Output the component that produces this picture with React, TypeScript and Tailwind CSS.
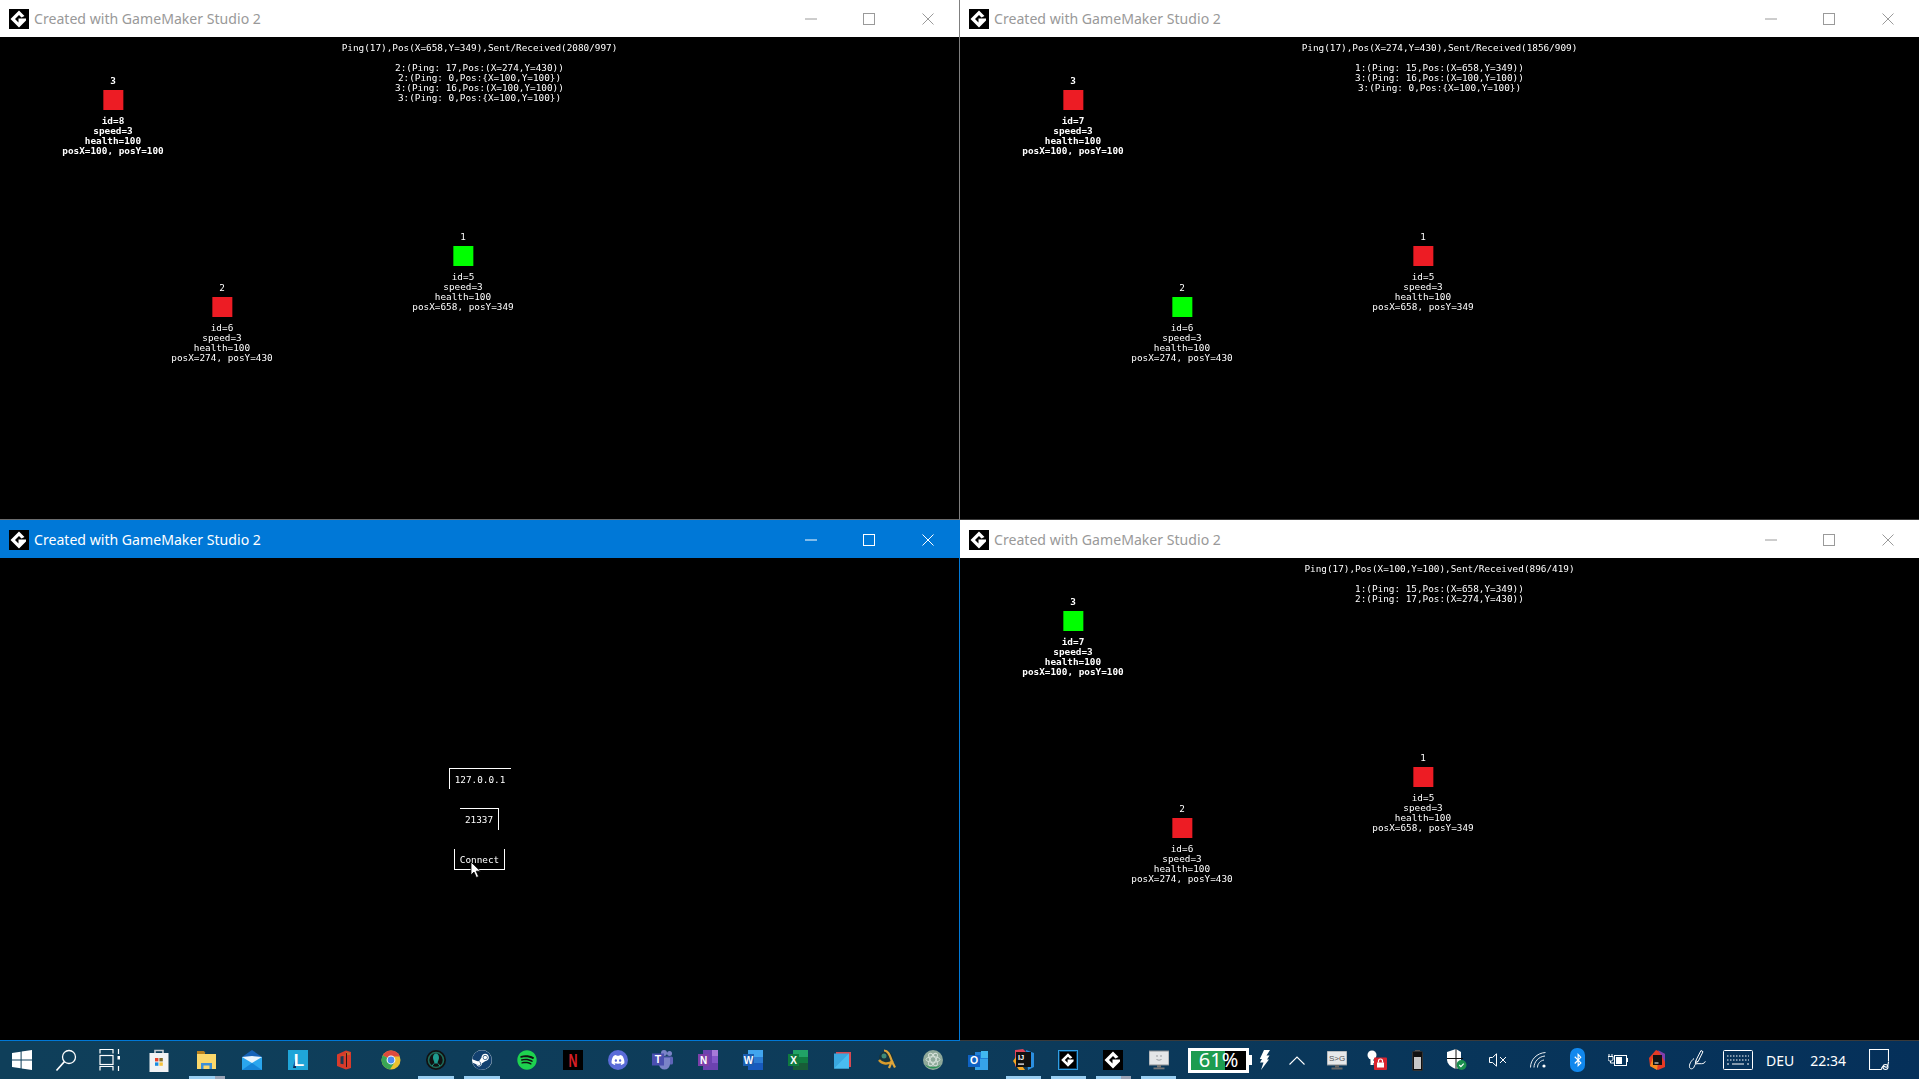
import React from "react";
import { FaDiscord, FaSpotify, FaSteam, FaBluetoothB } from "react-icons/fa";

const SANS = "font-['Noto_Sans',sans-serif]";

function GMLogo({ size = 20 }: { size?: number }) {
  return (
    <svg width={size} height={size} viewBox="0 0 20 20" className="shrink-0">
      <rect width="20" height="20" fill="#000" />
      <polygon points="10,1.5 15.5,7 12.5,8.5 10,6 6,10 9.5,13.5 9.5,9.5 17,9.5 17,11.5 10,18.500 1.500,10" fill="#fff" />
    </svg>
  );
}

type NodeData = { label: string; cx: number; top: number; id: string; x: number; y: number; mine?: boolean; bold?: boolean };

function PlayerNode({ n }: { n: NodeData }) {
  return (
    <div
      className={`absolute -translate-x-1/2 flex flex-col items-center ${n.bold ? "font-bold" : ""}`}
      style={{ left: n.cx, top: n.top }}
    >
      <div className="h-[10px] leading-[10px]">{n.label}</div>
      <div className={`w-[20px] h-[20px] mt-[4px] mb-[6px] ${n.mine ? "bg-[#00ff00]" : "bg-[#ed1c24]"}`} />
      <div className="leading-[10px] whitespace-pre">id={n.id}</div>
      <div className="leading-[10px] whitespace-pre">speed=3</div>
      <div className="leading-[10px] whitespace-pre">health=100</div>
      <div className="leading-[10px] whitespace-pre">posX={n.x}, posY={n.y}</div>
    </div>
  );
}

function Hud({ head, lines }: { head: string; lines: string[] }) {
  return (
    <div className="flex flex-col items-center pt-[6px] text-center">
      <div className="leading-[10px] whitespace-pre">{head}</div>
      <div className="mt-[10px]">
        {lines.map((l, i) => (
          <div key={i} className="leading-[10px] whitespace-pre">{l}</div>
        ))}
      </div>
    </div>
  );
}

function Window({
  active,
  low,
  children,
  className,
}: {
  active?: boolean;
  low?: boolean;
  children: React.ReactNode;
  className?: string;
}) {
  const ic = active ? "#ffffff" : "#9a9a9a";
  return (
    <div className={`flex flex-col min-w-0 min-h-0 ${className ?? ""}`}>
      <div
        className={`flex items-center shrink-0 pl-[9px] pr-[2px] ${
          active ? "h-[38px] pt-[2px] bg-[#0078d7]" : low ? "h-[38px] pt-[1px] bg-white" : "h-[37px] bg-white"
        }`}
      >
        <GMLogo />
        <span className={`ml-[5px] text-[14.1px] ${SANS} ${active ? "text-white" : "text-[#999999]"}`}>
          Created with GameMaker Studio 2
        </span>
        <div className="ml-auto flex items-center">
          <div className="w-[58px] flex justify-center">
            <svg width="12" height="12" viewBox="0 0 12 12"><line x1="0" x2="12" y1="6" y2="6" stroke={ic} /></svg>
          </div>
          <div className="w-[58px] mr-[1px] flex justify-center">
            <svg width="12" height="12" viewBox="0 0 12 12"><rect x="0.5" y="0.5" width="11" height="11" fill="none" stroke={ic} /></svg>
          </div>
          <div className="w-[58px] flex justify-center">
            <svg width="12" height="12" viewBox="0 0 12 12"><path d="M0.5 0.5L11.5 11.5M11.5 0.5L0.5 11.5" stroke={ic} /></svg>
          </div>
        </div>
      </div>
      <div className="relative flex-1 bg-black text-white font-['DejaVu_Sans_Mono',monospace] text-[9.35px] blur-[0.25px]">
        {children}
      </div>
    </div>
  );
}

const nodes = (mine: string, garbled: boolean): NodeData[] => [
  { label: "3", cx: 113, top: 39, id: garbled ? "8" : "7", x: 100, y: 100, mine: mine === "3", bold: true },
  { label: "2", cx: 222, top: 246, id: "6", x: 274, y: 430, mine: mine === "2" },
  { label: "1", cx: 463, top: 195, id: "5", x: 658, y: 349, mine: mine === "1" },
];

function Slot({ w = "w-[45.6px]", bar, grey, children }: { w?: string; bar?: boolean; grey?: boolean; children: React.ReactNode }) {
  return (
    <div className={`relative h-full flex items-center justify-center shrink-0 ${w}`}>
      {children}
      {bar && (
        <div className="absolute bottom-0 left-[5px] right-[5px] h-[3px] flex">
          <div className="flex-1 bg-[#99cdf0]" />
          {grey && <div className="w-[10px] bg-[#9aa3b5]" />}
        </div>
      )}
    </div>
  );
}

const letterFont = "Liberation Sans, sans-serif";
const W2 = "w-[45.1px]";

function OfficeTile({ bg, side, letter }: { bg: string; side: React.ReactNode; letter: string }) {
  return (
    <svg width="20" height="20" viewBox="0 0 20 20">
      {side}
      <rect x="0" y="4" width="11" height="12" fill={bg} />
      <text x="5.5" y="13.6" textAnchor="middle" fontSize="10" fontWeight="700" fill="#fff" fontFamily={letterFont}>{letter}</text>
    </svg>
  );
}

function TrayPen() {
  return (
    <svg width="20" height="22" viewBox="0 0 20 22" fill="none" stroke="#fff" strokeWidth="1">
      <path d="M13 1.5l2 1.2-5 10-2.2-1zM7.8 11.7l-.5 3 2.4-1.8" />
      <path d="M6 9.5C3 12 .8 15.5 1.6 18.5c.7 2 3.4 1.6 4.4-.4.8-1.8.8-3.2 3-3.4h4.5c2 0 3.5-1 3.8-2.4" />
    </svg>
  );
}

export default function App() {
  return (
    <div className="w-[1919px] h-[1079px] overflow-hidden bg-black flex flex-col">
      <div className="grid grid-cols-[960px_959px] grid-rows-[520px_521px] h-[1041px] shrink-0">
        <Window className="border-r border-r-[#7f7f7f] border-b border-b-[#6b6b6b]">
          <Hud
            head="Ping(17),Pos(X=658,Y=349),Sent/Received(2080/997)"
            lines={["2:(Ping: 17,Pos:(X=274,Y=430))", "2:(Ping: 0,Pos:{X=100,Y=100})", "3:(Ping: 16,Pos:(X=100,Y=100))", "3:(Ping: 0,Pos:{X=100,Y=100})"]}
          />
          {nodes("1", true).map((n) => <PlayerNode key={n.label} n={n} />)}
        </Window>
        <Window className="border-b border-b-[#3a3a3a]">
          <Hud
            head="Ping(17),Pos(X=274,Y=430),Sent/Received(1856/909)"
            lines={["1:(Ping: 15,Pos:(X=658,Y=349))", "3:(Ping: 16,Pos:(X=100,Y=100))", "3:(Ping: 0,Pos:{X=100,Y=100})"]}
          />
          {nodes("2", false).map((n) => <PlayerNode key={n.label} n={n} />)}
        </Window>
        <Window active className="border-r border-r-[#0078d7] border-b border-b-[#0078d7]">
          <div className="flex flex-col items-center pt-[210px] gap-[19px]">
            <div className="w-[62px] h-[21px] pt-[2px] border-t border-l border-white flex items-center justify-center font-medium">127.0.0.1</div>
            <div className="w-[39px] h-[22px] pt-[1px] border-t border-r border-white flex items-center justify-center">21337</div>
            <div className="relative w-[51px] h-[21px] pt-[2px] border-l border-r border-b border-white flex items-center justify-center">
              Connect
              <svg width="12" height="18" viewBox="0 0 12 18" className="absolute left-[15px] top-[12px]">
                <path d="M1 1v13l3-3 2.4 5.5 2.2-1L6.2 10.2H10.500z" fill="#fff" stroke="#000" strokeWidth="0.8" />
              </svg>
            </div>
          </div>
        </Window>
        <Window low className="border-b border-b-[#3a3a3a]">
          <Hud
            head="Ping(17),Pos(X=100,Y=100),Sent/Received(896/419)"
            lines={["1:(Ping: 15,Pos:(X=658,Y=349))", "2:(Ping: 17,Pos:(X=274,Y=430))"]}
          />
          {nodes("3", false).map((n) => <PlayerNode key={n.label} n={n} />)}
        </Window>
      </div>

      <div className={`h-[38px] shrink-0 flex items-stretch bg-gradient-to-r from-[#0f3f5a] via-[#0d3b5a] to-[#05305a] ${SANS}`}>
        <Slot w="w-[43px]">
          <svg width="20" height="20" viewBox="0 0 20 20" fill="#fff">
            <path d="M0 3l8.6-1.2v7.7H0zM9.6 1.6L20 0v9.5H9.6zM0 10.5h8.6v7.7L0 17zM9.6 10.5H20V20L9.6 18.4z" />
          </svg>
        </Slot>
        <Slot w="w-[45px]">
          <svg width="22" height="24" viewBox="0 0 22 24" fill="none" stroke="#fff" strokeWidth="1.3">
            <circle cx="14" cy="9" r="6.5" />
            <path d="M9.4 13.6L1.5 22.5" strokeWidth="1.6" />
          </svg>
        </Slot>
        <Slot w="w-[43px]">
          <svg width="22" height="24" viewBox="0 0 22 24" fill="none" stroke="#fff" strokeWidth="1.2">
            <path d="M1 5.5V1.5h13v4M1 22.5v-4h13v4" />
            <rect x="1" y="7.5" width="13" height="9" />
            <path d="M19.5 1v5M19.5 18v5" />
            <rect x="18.5" y="8" width="2.5" height="3.5" fill="#fff" stroke="none" />
          </svg>
        </Slot>
        <Slot w="w-[53px] pl-[3px]">
          <svg width="20" height="24" viewBox="0 0 20 24">
            <path d="M6 6V2.5h8V6" fill="none" stroke="#c9ced3" strokeWidth="1.6" />
            <rect x="0.5" y="5" width="19" height="19" fill="#f2f3f4" />
            <rect x="6" y="10" width="3.4" height="3.4" fill="#e8432b" />
            <rect x="10.4" y="10" width="3.4" height="3.4" fill="#7f6a2b" />
            <rect x="6" y="14.4" width="3.4" height="3.4" fill="#1a8ce0" />
            <rect x="10.4" y="14.4" width="3.4" height="3.4" fill="#f5c33b" />
          </svg>
        </Slot>
        <Slot bar grey>
          <svg width="19" height="20" viewBox="0 0 19 20">
            <path d="M0 1h7l1.5 2H8V5H0z" fill="#b9821f" />
            <rect y="4" width="19" height="15" fill="#fbd86b" />
            <path d="M4 19v-6h11v6h-2.5v-3.4h-6V19z" fill="#3c8fd8" />
          </svg>
        </Slot>
        <Slot>
          <svg width="20" height="20" viewBox="0 0 20 20">
            <path d="M0 7L10 0l10 7v3H0z" fill="#1462b8" />
            <rect y="7" width="20" height="13" fill="#2aa6ee" />
            <path d="M0 7l10 6 10-6-10-1z" fill="#e8f4fc" />
            <path d="M0 20l10-7 10 7z" fill="#1585d8" />
          </svg>
        </Slot>
        <Slot>
          <svg width="20" height="20" viewBox="0 0 20 20">
            <rect width="20" height="20" fill="#1fa5d8" />
            <path d="M5 18L8 4v14z" fill="#0d2c5a" />
            <text x="11" y="16" textAnchor="middle" fontSize="17" fontWeight="700" fill="#fff" fontFamily={letterFont}>L</text>
          </svg>
        </Slot>
        <Slot>
          <svg width="16" height="20" viewBox="0 0 16 20">
            <path d="M1 4.5L10 .5l5 1.5v16l-5 1.5-9-3.5z" fill="#d83b2b" />
            <path d="M5 6l5-1.5V2l4 .8v2z" fill="#c46a2a" />
            <path d="M4.5 6.5l3-.6v8.4l-3-.6z" fill="#173a55" />
            <path d="M10 3l1 .3v14L10 17z" fill="#2b1616" />
          </svg>
        </Slot>
        <Slot w="w-[47px] pl-[1.4px]">
          <svg width="20" height="20" viewBox="0 0 20 20">
            <circle cx="10" cy="10" r="9.5" fill="#eac131" />
            <path d="M10 10L1.8 5.2A9.5 9.5 0 0 1 18.9 6.5H10z" fill="#dd4b3e" />
            <path d="M10 10L1.8 5.2A9.5 9.5 0 0 0 9 19.5l5-8z" fill="#3aa655" />
            <circle cx="10" cy="10" r="4.4" fill="#fff" />
            <circle cx="10" cy="10" r="3.4" fill="#4a8af0" />
          </svg>
        </Slot>
        <Slot bar>
          <svg width="20" height="20" viewBox="0 0 20 20">
            <circle cx="10" cy="10" r="10" fill="#111" />
            <circle cx="10" cy="10" r="7.5" fill="none" stroke="#1e6a5a" strokeWidth="1.6" />
            <path d="M10 3.5c2.4 0 3 2.5 3 4.5 0 2-1.4 3-1.4 5.5h-3.2C8.4 11 7 10 7 8c0-2 .6-4.5 3-4.5z" fill="#1f9c90" />
            <path d="M8 13.5l-2 2.5M12 13.5l2 2.5" stroke="#1f9c90" />
          </svg>
        </Slot>
        <Slot bar>
          <span className="w-[20px] h-[20px] rounded-full bg-[#ffffff] flex items-center justify-center">
            <FaSteam size={20} color="#12406f" />
          </span>
        </Slot>
        <Slot>
          <span className="w-[18px] h-[18px] rounded-full bg-[#111] flex items-center justify-center">
            <FaSpotify size={20} color="#1ed24f" className="shrink-0" />
          </span>
        </Slot>
        <Slot>
          <svg width="20" height="20" viewBox="0 0 20 20">
            <rect width="20" height="20" fill="#000" />
            <text x="10" y="17" textAnchor="middle" fontSize="19" fontWeight="700" fill="#d81f26" fontFamily={letterFont} textLength="9" lengthAdjust="spacingAndGlyphs">N</text>
          </svg>
        </Slot>
        <Slot w="w-[44.2px]">
          <span className="w-[20px] h-[20px] rounded-full bg-[#5a6bd8] flex items-center justify-center">
            <FaDiscord size={14} color="#fff" />
          </span>
        </Slot>
        <Slot w={W2}>
          <svg width="21" height="20" viewBox="0 0 21 20">
            <circle cx="17.5" cy="3.5" r="2.5" fill="#7b83c8" />
            <rect x="10" y="6.5" width="11" height="8" rx="1.5" fill="#5f64b8" />
            <path d="M7 8h11v6a5.5 5.5 0 0 1-11 0z" fill="#7b83c8" />
            <circle cx="12" cy="3" r="3" fill="#7b83c8" />
            <rect y="3.5" width="12" height="12" fill="#4b4fb0" />
            <text x="6" y="13.4" textAnchor="middle" fontSize="10.5" fontWeight="700" fill="#fff" fontFamily={letterFont}>T</text>
          </svg>
        </Slot>
        <Slot w={W2}>
          <OfficeTile
            bg="#7d3fa8"
            letter="N"
            side={<><rect x="5" y="0" width="15" height="20" fill="#6c42b0" /><rect x="14" y="0" width="6" height="6" fill="#a77ad8" /><rect x="14" y="6" width="6" height="7" fill="#8557c8" /></>}
          />
        </Slot>
        <Slot w={W2}>
          <OfficeTile
            bg="#1a5db0"
            letter="W"
            side={<><rect x="5" y="0" width="15" height="7" fill="#41a5ee" /><rect x="5" y="7" width="15" height="6" fill="#2b7cd3" /><rect x="5" y="13" width="15" height="7" fill="#185abd" /></>}
          />
        </Slot>
        <Slot w={W2}>
          <OfficeTile
            bg="#0f7a3f"
            letter="X"
            side={<><rect x="5" y="0" width="15" height="7" fill="#21a366" /><rect x="5" y="7" width="15" height="6" fill="#107c41" /><rect x="5" y="13" width="15" height="7" fill="#185c37" /></>}
          />
        </Slot>
        <Slot w={W2}>
          <svg width="17" height="17" viewBox="0 0 17 17">
            <rect x="2" y="0" width="15" height="15" fill="#d94a52" />
            <rect x="0" y="1.5" width="15" height="15" fill="#3aa8e0" />
            <path d="M0 16.5L15 1.5v15z" fill="#49bdf0" />
          </svg>
        </Slot>
        <Slot w={W2}>
          <svg width="20" height="22" viewBox="0 0 20 22" fill="none">
            <circle cx="8" cy="9" r="7" fill="#16343c" />
            <path d="M1 11c3 4 9 5 14 1" stroke="#d69b2d" strokeWidth="2.4" />
            <path d="M6 1.5c5 0 6 6 8 11l3 6M14 12l-3 7" stroke="#e0a63a" strokeWidth="2.2" />
            <circle cx="6" cy="7" r="2.5" fill="#3f8a78" />
          </svg>
        </Slot>
        <Slot w={W2}>
          <svg width="20" height="20" viewBox="0 0 20 20" fill="none">
            <circle cx="10" cy="10" r="10" fill="#8fa99a" />
            <path d="M2 14.5a10 10 0 0 0 16 0 14 14 0 0 1-16 0z" fill="#2e9458" />
            <g stroke="#d9e4dd" strokeWidth="0.9">
              <ellipse cx="10" cy="9.5" rx="7" ry="2.8" />
              <ellipse cx="10" cy="9.5" rx="7" ry="2.8" transform="rotate(60 10 9.5)" />
              <ellipse cx="10" cy="9.5" rx="7" ry="2.8" transform="rotate(120 10 9.5)" />
            </g>
          </svg>
        </Slot>
        <Slot w={W2}>
          <svg width="20" height="20" viewBox="0 0 20 20">
            <path d="M7 2h13v8l-6.5 4L7 10z" fill="#1f7fd6" />
            <path d="M7 9l13 0v11H7z" fill="#36a3e8" />
            <rect x="13" y="1" width="7" height="7" fill="#41b8f0" />
            <rect x="0" y="5" width="12" height="12" fill="#0f62c4" />
            <text x="6" y="14.4" textAnchor="middle" fontSize="10.5" fontWeight="700" fill="#fff" fontFamily={letterFont}>O</text>
          </svg>
        </Slot>
        <Slot w={W2} bar>
          <svg width="21" height="22" viewBox="0 0 21 22">
            <path d="M13 1l8 3v14l-6 3z" fill="#2b8fe0" />
            <path d="M2 1l8-1 4 4-12 14z" fill="#e0455a" />
            <path d="M0 12l6 9h6L3 8z" fill="#f5a623" />
            <rect x="3" y="3" width="15" height="15" fill="#111" />
            <text x="5" y="11" fontSize="7.5" fontWeight="700" fill="#fff" fontFamily={letterFont}>IJ</text>
            <rect x="5" y="14.5" width="6" height="1.2" fill="#fff" />
          </svg>
        </Slot>
        <Slot w={W2} bar>
          <span className="w-[20px] h-[20px] border border-[#2f9fe6] flex items-center justify-center">
            <GMLogo size={16} />
          </span>
        </Slot>
        <Slot w={W2} bar grey>
          <GMLogo />
        </Slot>
        <Slot w={W2} bar>
          <svg width="20" height="20" viewBox="0 0 20 20">
            <rect x="0" y="1" width="20" height="14" fill="#e4e6e8" stroke="#8a8f93" />
            <rect x="8" y="15" width="4" height="2.5" fill="#777" />
            <rect x="4.5" y="17.5" width="11" height="1.8" fill="#777" />
            <circle cx="8" cy="6" r="0.7" fill="#7a7f85" />
            <circle cx="12" cy="6" r="0.7" fill="#7a7f85" />
            <path d="M7.5 9.5q2.5 1.5 5 0" fill="none" stroke="#7a7f85" strokeWidth="0.7" />
          </svg>
        </Slot>

        <div className="ml-[7px] flex items-center shrink-0">
          <div className="relative w-[61px] h-[25px] border-[3px] border-white bg-black overflow-hidden">
            <div className="h-full w-[34px] bg-[#1d9c50]" />
            <span className="absolute inset-0 flex items-center justify-center text-white text-[20px] leading-none">61%</span>
          </div>
          <div className="w-[3px] h-[10px] bg-white" />
        </div>
        <Slot w="w-[25px]">
          <svg width="11" height="20" viewBox="0 0 11 20" fill="#fff">
            <path d="M5 0h6L7.5 5.5h3L8 9.5h2L2 20l2.5-7.5H1L3 9H.8z" />
          </svg>
        </Slot>

        <Slot w="w-[40.1px]">
          <svg width="16" height="9" viewBox="0 0 16 9" fill="none" stroke="#fff" strokeWidth="1.1"><path d="M.5 8.5L8 1l7.5 7.5" /></svg>
        </Slot>
        <Slot w="w-[40.1px]">
          <svg width="20" height="19" viewBox="0 0 20 19">
            <rect x="0" y="0" width="20" height="14" fill="#e6e8ea" stroke="#8a8f93" />
            <text x="10" y="10" textAnchor="middle" fontSize="8" fill="#555" fontFamily={letterFont}>S&gt;G</text>
            <rect x="8" y="14" width="4" height="2.5" fill="#666" />
            <rect x="4.5" y="16.5" width="11" height="2" fill="#666" />
          </svg>
        </Slot>
        <Slot w="w-[40.1px]">
          <svg width="20" height="20" viewBox="0 0 20 20">
            <circle cx="5" cy="5" r="4.5" fill="#fff" />
            <path d="M3.5 9h3v2h1v2h-1v2H3.5z" fill="#fff" />
            <rect x="7" y="7.5" width="13" height="12.5" rx="1" fill="#d9232e" />
            <rect x="10" y="12.5" width="7" height="5" fill="#fff" />
            <path d="M11.5 12.5v-1.5a2 2 0 0 1 4 0v1.5" fill="none" stroke="#fff" strokeWidth="1.2" />
          </svg>
        </Slot>
        <Slot w="w-[40.1px]">
          <svg width="11" height="21" viewBox="0 0 11 21">
            <rect x="3" y="0" width="5" height="2" fill="#555" />
            <rect x="0.5" y="1.5" width="10" height="19" rx="1" fill="#111" stroke="#333" />
            <rect x="2" y="7" width="7" height="12" fill="#c8c8c8" />
          </svg>
        </Slot>
        <Slot w="w-[40.1px]">
          <svg width="20" height="22" viewBox="0 0 20 22">
            <path d="M9 0L0 3v7c0 5 3.5 8 9 10 2-.7 3.6-1.6 5-3V3z" fill="#fff" />
            <path d="M9 0v20M0 9.5h16" stroke="#111" strokeWidth="1" />
            <circle cx="14.5" cy="16" r="5" fill="#1a8f4e" />
            <path d="M12.3 16l1.6 1.6 2.8-3" fill="none" stroke="#fff" strokeWidth="1.2" />
          </svg>
        </Slot>
        <Slot w="w-[40.1px]">
          <svg width="18" height="14" viewBox="0 0 18 14" fill="none" stroke="#fff" strokeWidth="1">
            <path d="M.5 4.5h3L7.5.8v12.4l-4-3.700h-3z" />
            <path d="M11 4l6 6M17 4l-6 6" />
          </svg>
        </Slot>
        <Slot w="w-[40.1px]">
          <svg width="16" height="16" viewBox="0 0 16 16" fill="none" stroke="#e8eef2" strokeWidth="1">
            <path d="M.5 15.500C.5 7.500 7 1 15.500.5" />
            <path d="M4 15.500C4 9.500 9 4.500 15 4" />
            <path d="M7.500 15.500C7.500 11.500 10.500 8.500 14 8" />
            <circle cx="14" cy="14" r="1.600" fill="#fff" stroke="none" />
          </svg>
        </Slot>
        <Slot w="w-[40.1px]">
          <span className="w-[15px] h-[24px] rounded-[7px] bg-[#1188ee] flex items-center justify-center">
            <FaBluetoothB size={14} color="#fff" />
          </span>
        </Slot>
        <Slot w="w-[40.1px]">
          <svg width="20" height="14" viewBox="0 0 20 14" fill="none" stroke="#fff">
            <rect x="6.500" y="2.500" width="12" height="10" />
            <rect x="8" y="4" width="6" height="7" fill="#fff" stroke="none" />
            <path d="M1 1v2M4 1v2M0 3.500h5V6c0 1.500-1 2-2.500 2S0 7.500 0 6z" />
            <path d="M2.500 8v2h4" />
            <rect x="18.500" y="5" width="1.500" height="4" fill="#fff" stroke="none" />
          </svg>
        </Slot>
        <Slot w="w-[40.1px]">
          <svg width="17" height="20" viewBox="0 0 17 20">
            <path d="M7 0l9 4v13l-7 3-8-4L0 8z" fill="#e63a24" />
            <path d="M9 0l7 4v8z" fill="#7b3fb0" />
            <path d="M1 16l4-11 5 1-2 14z" fill="#f58a1f" />
            <rect x="4" y="5" width="9" height="10" fill="#111" />
            <rect x="5.500" y="12.500" width="4" height="1" fill="#fff" />
          </svg>
        </Slot>
        <Slot w="w-[40.1px]"><TrayPen /></Slot>
        <Slot w="w-[40.1px]">
          <svg width="30" height="20" viewBox="0 0 30 20" fill="none" stroke="#fff">
            <rect x="0.500" y="0.500" width="29" height="19" rx="1" />
            <path d="M4 6h22M4 10h22" strokeDasharray="1.500 1.500" />
            <path d="M4 14h2M9 14h12M24 14h2" />
          </svg>
        </Slot>
        <Slot w="w-[44px]"><span className="text-[14px] text-white">DEU</span></Slot>
        <Slot w="w-[52px]"><span className="text-[14px] text-white">22:34</span></Slot>
        <Slot w="w-[50px]">
          <svg width="20" height="22" viewBox="0 0 20 22" fill="none" stroke="#fff" strokeWidth="1.100">
            <path d="M12.500 20.500H.5V.5h19v12" />
            <path d="M12.500 20.500c0-3 2-3.500 3-3s3 3 4-4.500" />
            <circle cx="16.500" cy="18" r="2.500" />
          </svg>
        </Slot>
      </div>
    </div>
  );
}
